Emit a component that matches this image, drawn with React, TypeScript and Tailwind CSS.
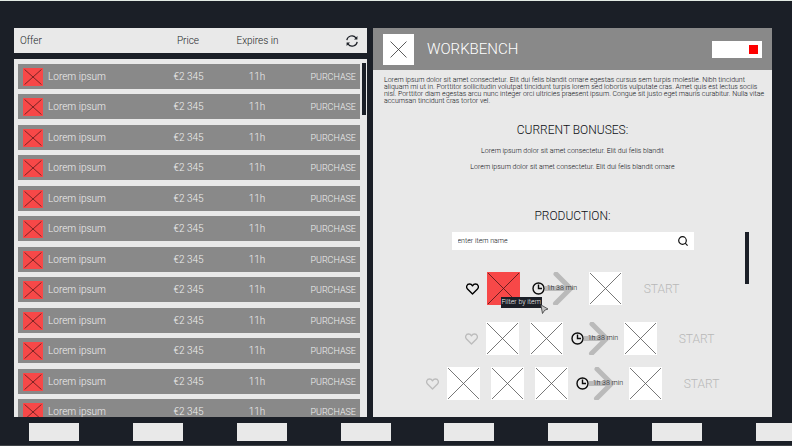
import React from "react";

const offers = Array.from({ length: 12 }, (_, id) => ({
  id,
  name: "Lorem ipsum",
  price: "€2 345",
  expires: "11h",
}));

const recipes = [
  { id: 1, inputs: 1, favourite: true, highlighted: true, layout: "" },
  { id: 2, inputs: 2, favourite: false, highlighted: false, layout: "mt-[17px] pl-[34px]" },
  { id: 3, inputs: 3, favourite: false, highlighted: false, layout: "mt-[12px]" },
];

const columns = "grid grid-cols-[130fr_71fr_66fr_66fr] items-center";

function Cross({ className }: { className: string }) {
  return (
    <svg viewBox="0 0 32 32" preserveAspectRatio="none" className={className} aria-hidden="true">
      <path d="M1 1 31 31M31 1 1 31" stroke="currentColor" strokeWidth=".8" fill="none" vectorEffect="non-scaling-stroke" />
    </svg>
  );
}

function RefreshIcon() {
  return (
    <svg viewBox="0 0 12 12" className="h-3 w-3" fill="none" stroke="#1b1e25" strokeWidth="1.2" aria-hidden="true">
      <path d="M.8 5.200A5.200 5.200 0 0 1 10 2.800M11.200 6.800A5.200 5.200 0 0 1 2 9.200" />
      <path d="M11.400 1v3.400H8zM.6 11V7.600H4z" fill="#1b1e25" stroke="none" />
    </svg>
  );
}

function Heart({ active }: { active: boolean }) {
  return (
    <svg viewBox="0 0 13 12" className={active ? "h-3 w-[13px] text-black" : "h-3 w-[13px] text-[#bcbcbc]"} aria-hidden="true">
      <path
        d="M6.500 10.900 1.500 6C-.2 4.300.6 1 3.600 1c1.300 0 2.300.8 2.900 1.800C7.100 1.800 8.100 1 9.400 1c3 0 3.800 3.300 2.100 5z"
        fill="none"
        stroke="currentColor"
        strokeWidth="1.400"
        strokeLinejoin="round"
      />
    </svg>
  );
}

function Duration({ wide }: { wide: boolean }) {
  return (
    <div className={wide ? "relative mx-[12px] h-[33px] w-[45px]" : "relative mx-[8px] h-[33px] w-[45px]"}>
      <svg viewBox="0 0 45 33" className="h-full w-full" fill="none" aria-hidden="true">
        <path d={wide ? "M13 16.5H37" : "M13 16.5H34"} stroke="#bababa" strokeWidth="5" />
        <path
          d={wide ? "M24 2 38.500 16.500 23.500 31.500" : "M21 2 35.500 16.500 20.500 31.500"}
          stroke="#bababa"
          strokeWidth="5"
          strokeLinecap="round"
          strokeLinejoin="round"
        />
        <circle cx="6.500" cy="16.500" r="5.500" stroke="#0b0b0b" strokeWidth="1.400" fill="#e9e9e9" />
        <path d="M6.500 12.500v4h3.500" stroke="#0b0b0b" strokeWidth="1.400" />
      </svg>
      <span
        className={
          wide
            ? "absolute left-[15px] top-[12px] whitespace-nowrap text-[7px] leading-[9px]"
            : "absolute left-[17px] top-[12px] whitespace-nowrap text-[7px] leading-[9px]"
        }
      >
        1h 38 min
      </span>
    </div>
  );
}

function Item() {
  return (
    <div className="h-[33px] w-[33px] bg-white text-[#555]">
      <Cross className="h-full w-full" />
    </div>
  );
}

function FilteredItem() {
  return (
    <div className="relative h-[33px] w-[33px] bg-[#f74848] text-[#4a1818]">
      <Cross className="h-full w-full" />
      <span
        role="tooltip"
        className="absolute left-[14px] top-[25px] z-10 h-[11px] w-[41px] whitespace-nowrap bg-[#1b1f27] text-center text-[7px] leading-[10px] text-[#f4f4f4]"
      >
        Filter by item
      </span>
      <svg viewBox="0 0 9 11" className="absolute left-[53px] top-[32px] z-20 h-[11px] w-[9px]" aria-hidden="true">
        <path d="M.8.8 8 5 4.700 6.200 2.500 9.500z" fill="#c4c4c4" stroke="#3a3a3a" strokeWidth=".8" />
      </svg>
    </div>
  );
}

function Offers() {
  return (
    <section className="relative min-h-0 min-w-0">
      <table className="flex h-full flex-col gap-[6px] text-[10px] leading-[12px]">
        <thead className="block bg-[#e9e9e9] text-[#1b1f27]">
          <tr className={`${columns} h-[25px] pl-[6px] pr-[9px]`}>
            <th className="text-left font-light">Offer</th>
            <th className="font-light">Price</th>
            <th className="font-light">Expires in</th>
            <th className="flex justify-end">
              <button type="button" aria-label="Refresh">
                <RefreshIcon />
              </button>
            </th>
          </tr>
        </thead>
        <tbody className="block min-h-0 flex-1 overflow-hidden bg-[#e9e9e9] pl-[4px] pr-[7px] pt-[5px] text-[#f0f0f0]">
          {offers.map((offer) => (
            <tr key={offer.id} className={`${columns} h-[25px] bg-[#898989] pl-[5px] pr-[4px] odd:mb-[5px] even:mb-[6px]`}>
              <td className="flex items-center gap-[5px]">
                <span className="h-[18px] w-[20px] bg-[#f74848] p-px text-[#5c1c1c]">
                  <Cross className="h-full w-full" />
                </span>
                {offer.name}
              </td>
              <td className="text-center">{offer.price}</td>
              <td className="text-center">{offer.expires}</td>
              <td className="flex justify-end">
                <button type="button" className="text-[9px] leading-[12px]">PURCHASE</button>
              </td>
            </tr>
          ))}
        </tbody>
      </table>
      <div className="absolute right-[1px] top-[35px] h-[52px] w-[4px] bg-[#1b1f27]" />
    </section>
  );
}

function Workbench() {
  return (
    <section className="min-h-0 min-w-0 overflow-hidden bg-[#e9e9e9] text-[#0d0f14]">
      <header className="flex h-[42px] items-center bg-[#898989] px-[10px]">
        <div className="flex h-[31px] w-[31px] items-center justify-center bg-white text-[#333]">
          <Cross className="h-[17px] w-[17px]" />
        </div>
        <h1 className="ml-[13px] flex-1 text-[15px] leading-[18px] text-white">WORKBENCH</h1>
        <div className="flex h-[17px] w-[50px] items-center justify-end bg-white pr-[4px]">
          <span className="h-[9px] w-[9px] bg-[#fe0000]" />
        </div>
      </header>

      <p className="whitespace-nowrap px-[11px] pt-[7px] text-[7px] leading-[7px]">
        Lorem ipsum dolor sit amet consectetur. Elit dui felis blandit ornare egestas cursus sem turpis molestie. Nibh tincidunt
        <br />
        aliquam mi ut in. Porttitor sollicitudin volutpat tincidunt turpis lorem sed lobortis vulputate cras. Amet quis est lectus sociis
        <br />
        nisl. Porttitor diam egestas arcu nunc integer orci ultricies praesent ipsum. Congue sit justo eget mauris curabitur. Nulla vitae
        <br />
        accumsan tincidunt cras tortor vel.
      </p>

      <div className="pt-[17px] text-center">
        <h2 className="text-[12px] leading-[16px]">CURRENT BONUSES:</h2>
        <ul className="mt-[9px] flex flex-col gap-[8px] text-[7px] leading-[8px]">
          <li>Lorem ipsum dolor sit amet consectetur. Elit dui felis blandit</li>
          <li>Lorem ipsum dolor sit amet consectetur. Elit dui felis blandit ornare</li>
        </ul>
        <h2 className="mt-[37px] text-[12px] leading-[16px]">PRODUCTION:</h2>
      </div>

      <div className="relative mt-[8px]">
        <label className="mx-auto flex h-[18px] w-[242px] items-center bg-white px-[6px]">
          <input
            type="text"
            aria-label="Item name"
            placeholder="enter item name"
            className="min-w-0 flex-1 text-[7px] leading-[9px] outline-none placeholder:text-[#0d0f14]"
          />
          <svg viewBox="0 0 10 10" className="h-[10px] w-[10px]" fill="none" stroke="#111" strokeWidth="1.200" aria-hidden="true">
            <circle cx="4.500" cy="4.500" r="3.800" />
            <path d="M7.200 7.200 9.600 9.600" />
          </svg>
        </label>
        <div className="absolute right-[23px] top-0 h-[52px] w-[4px] bg-[#1b1f27]" />

        <ul className="mt-[22px]">
          {recipes.map((recipe) => (
            <li key={recipe.id} className={`flex items-center justify-center ${recipe.layout}`}>
              <button type="button" aria-label="Favourite" className="mr-[8px]">
                <Heart active={recipe.favourite} />
              </button>
              <div className="flex gap-[11px]">
                {Array.from({ length: recipe.inputs }, (_, i) =>
                  recipe.highlighted ? <FilteredItem key={i} /> : <Item key={i} />
                )}
              </div>
              <Duration wide={recipe.highlighted} />
              <Item />
              <button type="button" className="ml-[22px] text-[12px] leading-[16px] text-[#b8b8b8]">
                START
              </button>
            </li>
          ))}
        </ul>
      </div>
    </section>
  );
}

export default function App() {
  return (
    <div className="flex h-screen flex-col overflow-hidden border-b border-t border-b-[#3f4347] border-t-[#e3ebe4] bg-[#1b1f27] font-[Roboto,sans-serif] font-light">
      <main className="grid min-h-0 flex-1 grid-cols-[353fr_399fr] grid-rows-[minmax(0,1fr)] gap-[6px] pl-[14px] pr-[20px] pt-[27px]">
        <Offers />
        <Workbench />
      </main>
      <nav className="-mr-[14px] ml-[29px] flex justify-between pb-[4px] pt-[6px]">
        {Array.from({ length: 8 }, (_, slot) => (
          <button key={slot} type="button" aria-label={`Slot ${slot + 1}`} className="h-[18px] w-[50px] bg-[#e9e9e9]" />
        ))}
      </nav>
    </div>
  );
}
